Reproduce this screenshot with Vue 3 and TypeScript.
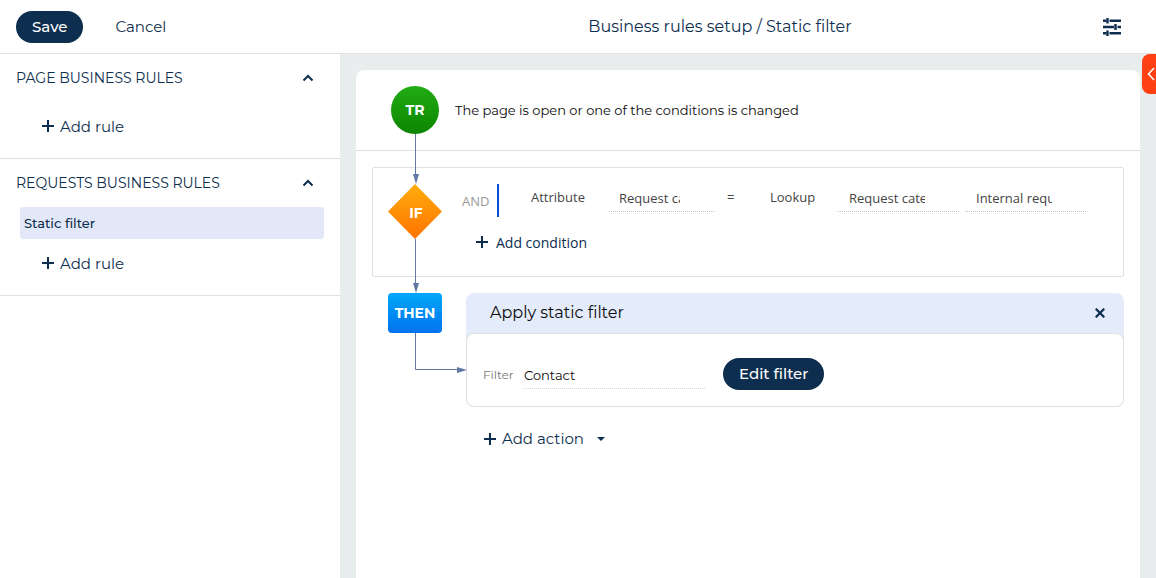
<script setup lang="ts">
import { reactive, ref } from 'vue'

interface RuleSection {
  id: string
  title: string
  rules: string[]
  open: boolean
}

const sections = reactive<RuleSection[]>([
  { id: 'page', title: 'PAGE BUSINESS RULES', rules: [], open: true },
  { id: 'requests', title: 'REQUESTS BUSINESS RULES', rules: ['Static filter'], open: true },
])

const leftAttribute = ref('Request category')
const rightLookup = ref('Request category')
const rightValue = ref('Internal request')
const filterColumn = ref('Contact')
</script>

<template>
  <div class="page">
    <header class="topbar">
      <div class="topbar-actions">
        <button type="button" class="pill">Save</button>
        <button type="button" class="plain cancel">Cancel</button>
      </div>
      <h1 class="topbar-title">Business rules setup / Static filter</h1>
      <button type="button" class="plain settings" aria-label="Settings">
        <svg width="18" height="18" viewBox="0 0 18 18" aria-hidden="true">
          <path
            d="M0 2.700h3.500M6.500 2.700H18M0 9h11M14.500 9H18M0 15.300h3.500M6.500 15.300H18"
            fill="none" stroke="#0d2e4e" stroke-width="2.600"
          />
          <path d="M4.500 0v5.500M12.500 6v6M4.500 12.500V18" fill="none" stroke="#0d2e4e" stroke-width="2.400" />
        </svg>
      </button>
    </header>

    <div class="workspace">
      <aside class="sidebar">
        <section v-for="section in sections" :key="section.id" class="section">
          <button
            type="button"
            class="plain section-title"
            :aria-expanded="section.open"
            @click="section.open = !section.open"
          >
            <span>{{ section.title }}</span>
            <svg :class="{ closed: !section.open }" width="12" height="8" viewBox="0 0 12 8" aria-hidden="true">
              <path d="M1.500 6.500 6 2l4.500 4.500" fill="none" stroke="#0d2e4e" stroke-width="2" />
            </svg>
          </button>
          <template v-if="section.open">
            <button v-for="rule in section.rules" :key="rule" type="button" class="plain rule">{{ rule }}</button>
            <button type="button" class="plain add add-rule">
              <svg width="12" height="12" viewBox="0 0 12 12" aria-hidden="true">
                <path d="M6 0v12M0 6h12" stroke="#0d2e4e" stroke-width="2" />
              </svg>
              <span>Add rule</span>
            </button>
          </template>
        </section>
      </aside>

      <main class="main">
        <div class="canvas">
          <div class="trigger">
            <div class="node node-tr">TR</div>
            <p class="trigger-text">The page is open or one of the conditions is changed</p>
          </div>

          <div class="conditions">
            <div class="node node-if">IF</div>
            <div class="condition-body">
              <div class="condition-row">
                <span class="operator">AND</span>
                <span class="kind attribute">Attribute</span>
                <input v-model="leftAttribute" class="cell narrow" type="text" aria-label="Attribute" />
                <span class="kind equals">=</span>
                <span class="kind lookup">Lookup</span>
                <input v-model="rightLookup" class="cell" type="text" aria-label="Lookup" />
                <input v-model="rightValue" class="cell" type="text" aria-label="Lookup value" />
              </div>
              <button type="button" class="plain add add-condition">
                <svg width="12" height="12" viewBox="0 0 12 12" aria-hidden="true">
                  <path d="M6 0v12M0 6h12" stroke="#0d2e4e" stroke-width="2" />
                </svg>
                <span>Add condition</span>
              </button>
            </div>
          </div>

          <div class="actions">
            <div class="node node-then">THEN</div>
            <div class="actions-body">
              <section class="action">
                <div class="action-head">
                  <h2>Apply static filter</h2>
                  <button type="button" class="plain close" aria-label="Remove action">
                    <svg width="10" height="10" viewBox="0 0 10 10" aria-hidden="true">
                      <path d="M0.700 0.700l8.600 8.600M9.300 0.700L0.700 9.300" stroke="#0d2e4e" stroke-width="2.200" />
                    </svg>
                  </button>
                </div>
                <div class="action-content">
                  <label for="filter-column">Filter</label>
                  <input id="filter-column" v-model="filterColumn" type="text" />
                  <button type="button" class="pill edit">Edit filter</button>
                </div>
              </section>
              <button type="button" class="plain add add-action">
                <svg width="12" height="12" viewBox="0 0 12 12" aria-hidden="true">
                  <path d="M6 0v12M0 6h12" stroke="#0d2e4e" stroke-width="2" />
                </svg>
                <span>Add action</span>
                <svg class="caret" width="8" height="5" viewBox="0 0 8 5" aria-hidden="true">
                  <path d="M0 0h8L4 4z" fill="#0d2e4e" />
                </svg>
              </button>
            </div>
          </div>

          <svg class="links" width="84" height="250" viewBox="0 0 84 250" aria-hidden="true">
            <path d="M32.500 0v44M32.500 105v50M32.500 199v36.500H78" fill="none" stroke="#6279a3" />
            <path d="M30 40h6l-3 10zM30 149h6l-3 10zM74 233v6l10-3z" fill="#6279a3" />
          </svg>
        </div>
      </main>
      <button type="button" class="plain drawer" aria-label="Open side panel">
        <svg width="8" height="14" viewBox="0 0 8 14" aria-hidden="true">
          <path d="M7 1 1.500 7 7 13" fill="none" stroke="#fff" stroke-width="1.500" />
        </svg>
      </button>
    </div>
  </div>
</template>

<style>
body {
  margin: 0;
}
</style>

<style scoped>
.page {
  display: flex;
  flex-direction: column;
  min-height: 100vh;
  background: #fff;
  color: #0d2e4e;
  font-family: Montserrat, Inter, sans-serif;
  font-size: 15px;
}
.page *,
.page {
  box-sizing: border-box;
}
h1,
h2,
p {
  margin: 0;
  font-weight: 400;
}
button,
input {
  font-family: inherit;
  margin: 0;
  border: 0;
  color: inherit;
}
button {
  cursor: pointer;
}
svg {
  display: block;
  flex: none;
}
.plain {
  padding: 0;
  background: none;
}
.pill {
  height: 32px;
  padding: 0 16px;
  border-radius: 16px;
  background: #0d2e4e;
  color: #fff;
  font-size: 15px;
  font-weight: 500;
}
.edit {
  padding-bottom: 2px;
}
.topbar {
  display: grid;
  grid-template-columns: 340px 1fr 76px;
  align-items: center;
  height: 54px;
  border-bottom: 1px solid #dfe3e4;
}
.topbar-actions {
  display: flex;
  align-items: center;
  padding-left: 16px;
  gap: 32px;
}
.cancel {
  font-size: 15px;
}
.topbar-title {
  padding-left: 20px;
  text-align: center;
  font-size: 16px;
}
.settings {
  justify-self: start;
  margin-left: 23px;
}
.workspace {
  position: relative;
  display: flex;
  flex: 1;
}
.sidebar {
  flex: none;
  width: 340px;
}
.section {
  padding-bottom: 8px;
  border-bottom: 1px solid #e0e0e0;
}
.section-title {
  display: flex;
  align-items: center;
  justify-content: space-between;
  width: 100%;
  height: 48px;
  padding: 0 26px 0 16px;
  font-size: 14px;
}
.closed {
  transform: rotate(180deg);
}
.rule {
  display: block;
  width: 304px;
  height: 32px;
  margin-left: 20px;
  padding: 0 4px;
  border-radius: 3px;
  background: #e2e8f8;
  font-size: 13px;
  font-weight: 500;
  text-align: left;
}
.add {
  display: flex;
  align-items: center;
  gap: 6px;
  font-size: 15px;
}
.add-rule {
  height: 48px;
  margin-left: 42px;
}
.main {
  display: flex;
  flex: 1;
  min-width: 0;
  padding: 16px 16px 0;
  background: #e9eded;
}
.canvas {
  position: relative;
  flex: 1;
  min-width: 0;
  border-radius: 8px 8px 0 0;
  background: #fff;
}
.node {
  display: flex;
  flex: none;
  align-items: center;
  justify-content: center;
  color: #fff;
  font-size: 14px;
  font-weight: 700;
}
.node-tr {
  width: 48px;
  height: 48px;
  border-radius: 50%;
  background: linear-gradient(#22ac14, #0c8500);
}
.node-if {
  width: 54px;
  height: 55px;
  padding: 2px 0 0 2px;
  background: linear-gradient(#ffad0d, #ff7200);
  clip-path: polygon(50% 0, 100% 50%, 50% 100%, 0 50%);
  font-family: Montserrat, Inter, sans-serif;
}
.node-then {
  width: 54px;
  height: 40px;
  border-radius: 4px;
  background: linear-gradient(#00a8f8, #0072ee);
}
.trigger {
  display: flex;
  align-items: center;
  gap: 16px;
  height: 81px;
  padding: 0 16px 0 35px;
  border-bottom: 1px solid #e0e0e0;
  color: #0a0a0a;
}
.trigger-text {
  font-size: 13px;
}
.conditions {
  display: flex;
  gap: 20px;
  height: 110px;
  margin: 16px;
  padding: 16px 15px;
  border: 1px solid #e0e0e0;
  border-radius: 2px;
  font-family: 'Open Sans', sans-serif;
}
.condition-row {
  display: flex;
  align-items: flex-start;
  color: #444;
  font-size: 13px;
}
.operator {
  width: 37px;
  height: 33px;
  border-right: 2px solid #004fd6;
  color: #999;
  line-height: 34px;
}
.kind {
  line-height: 27px;
}
.attribute {
  width: 110px;
  padding-left: 32px;
}
.equals {
  width: 56px;
  padding-left: 13px;
}
.lookup {
  width: 68px;
}
.cell {
  width: 121px;
  height: 28px;
  margin-right: 6px;
  padding: 0 34px 0 11px;
  border-bottom: 1px dotted #bbb;
  background: none;
  font-size: 13px;
}
.narrow {
  width: 105px;
  margin-right: 0;
  padding-left: 10px;
}
.add-condition {
  height: 20px;
  margin: 15px 0 0 14px;
  gap: 8px;
  font-size: 14px;
}
.actions {
  display: flex;
  gap: 24px;
  padding: 0 16px 0 32px;
}
.actions-body {
  flex: 1;
  min-width: 0;
}
.action {
  border-radius: 8px;
  background: #e4ebfa;
}
.action-head {
  display: flex;
  align-items: center;
  justify-content: space-between;
  height: 40px;
  padding: 0 19px 0 24px;
}
.action-head h2 {
  padding-bottom: 2px;
  color: #0a0a0a;
  font-size: 16px;
}
.action-content {
  display: flex;
  align-items: center;
  height: 74px;
  padding: 8px 16px 0;
  border: 1px solid #e0e0e0;
  border-radius: 8px;
  background: #fff;
}
.action-content label {
  width: 41px;
  padding-top: 1px;
  color: #777;
  font-size: 12px;
}
.action-content input {
  width: 181px;
  height: 28px;
  margin: 2px 18px 0 0;
  padding: 0;
  border-bottom: 1px dotted #d5d5d5;
  background: none;
  color: #0a0a0a;
  font-size: 13px;
}
.add-action {
  height: 32px;
  margin: 16px 0 0 18px;
}
.add-action span {
  padding-bottom: 1px;
}
.caret {
  margin-left: 7px;
}
.links {
  position: absolute;
  left: 27px;
  top: 64px;
  pointer-events: none;
}
.drawer {
  position: absolute;
  top: 0;
  right: 0;
  display: flex;
  align-items: center;
  justify-content: center;
  width: 14px;
  height: 40px;
  padding-left: 3px;
  border-radius: 8px 0 0 8px;
  background: #ff4013;
}
</style>
